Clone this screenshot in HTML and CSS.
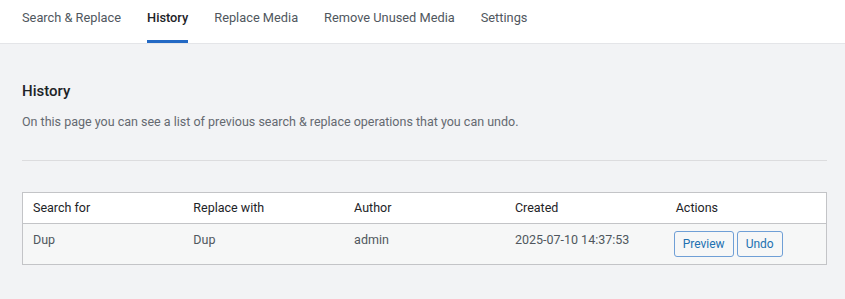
FILE: index.html
```html
<!DOCTYPE html>
<html lang="en">
<head>
<meta charset="utf-8">
<title>History</title>
<link rel="stylesheet" href="styles.css">
</head>
<body>
<nav class="tabs">
  <a class="tab">Search &amp; Replace</a>
  <a class="tab active">History</a>
  <a class="tab">Replace Media</a>
  <a class="tab">Remove Unused Media</a>
  <a class="tab">Settings</a>
</nav>
<main class="content">
  <h2 class="title">History</h2>
  <p class="desc">On this page you can see a list of previous search &amp; replace operations that you can undo.</p>
  <hr class="sep">
  <table class="history">
    <thead>
      <tr>
        <th>Search for</th>
        <th>Replace with</th>
        <th>Author</th>
        <th>Created</th>
        <th>Actions</th>
      </tr>
    </thead>
    <tbody>
      <tr>
        <td>Dup</td>
        <td>Dup</td>
        <td>admin</td>
        <td>2025-07-10 14:37:53</td>
        <td class="actions"><button class="btn">Preview</button><button class="btn">Undo</button></td>
      </tr>
    </tbody>
  </table>
</main>
</body>
</html>
```

FILE: styles.css
```css
* { box-sizing: border-box; }
html, body { margin: 0; padding: 0; }
body {
  background: #f2f3f5;
  font-family: Roboto, "Liberation Sans", Arial, sans-serif;
  font-size: 12.5px;
  color: #1d2327;
  width: 845px;
  height: 299px;
  overflow: hidden;
}
.tabs {
  display: flex;
  gap: 26px;
  background: #fff;
  height: 44px;
  border-bottom: 1px solid #e4e5e8;
  padding-left: 22px;
}
.tab {
  display: block;
  padding-top: 10px;
  height: 43px;
  line-height: 15px;
  color: #50575e;
  font-size: 12.8px;
  font-weight: 400;
  border-bottom: 3px solid transparent;
}
.tab.active {
  color: #1d2327;
  font-weight: 500;
  border-bottom-color: #2369c4;
}
.content {
  padding: 0 18px 0 22px;
}
.title {
  margin: 0;
  padding-top: 37px;
  font-size: 15px;
  line-height: 20px;
  font-weight: 500;
  color: #1d2327;
}
.desc {
  margin: 12px 0 0;
  color: #646970;
  line-height: 18px;
}
.sep {
  margin: 29px 0 0;
  border: 0;
  border-top: 1px solid #dcdcde;
  height: 0;
}
.history {
  margin-top: 31px;
  width: 805px;
  border-collapse: collapse;
  table-layout: fixed;
  border: 1px solid #c3c4c7;
}
.history th {
  background: #fff;
  text-align: left;
  font-weight: normal;
  color: #1d2327;
  padding: 6px 10px;
  line-height: 18px;
  border-bottom: 1px solid #c3c4c7;
}
.history td {
  background: #f6f7f7;
  color: #50575e;
  padding: 7px 10px 7px;
  line-height: 18px;
  vertical-align: top;
}
.history td.actions { padding-left: 8px; }
.btn {
  font-family: inherit;
  font-size: 12px;
  color: #2271b1;
  background: #f6f7f7;
  border: 1px solid #6f9fd6;
  border-radius: 3px;
  height: 26px;
  padding: 0 8px;
  margin-right: 3px;
  cursor: pointer;
}
```
